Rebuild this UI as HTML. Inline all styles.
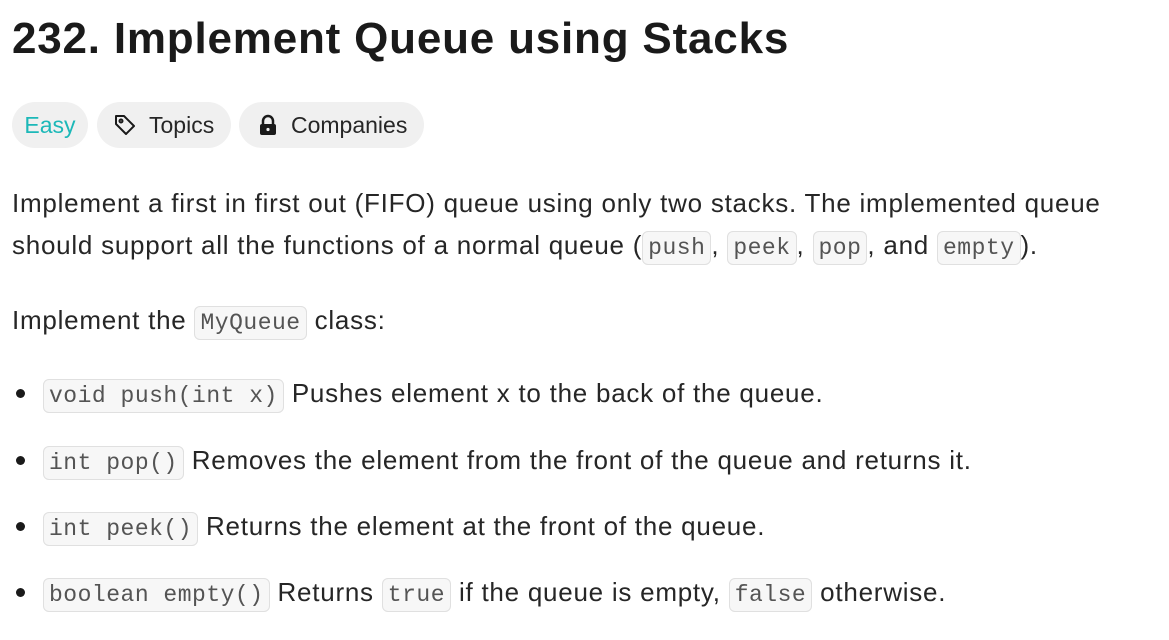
<!DOCTYPE html>
<html><head><meta charset="utf-8"><style>
body{margin:0;background:#fff;color:#262626;font-family:"Liberation Sans",sans-serif;width:1169px;height:640px;overflow:hidden;position:relative}
h1{position:absolute;left:12px;top:14px;margin:0;font-size:44px;font-weight:bold;color:#1a1a1a;letter-spacing:0.8px}
.pill{position:absolute;top:102px;height:46px;border-radius:23px;background:#f0f0f0;font-size:23px;line-height:46px;color:#262626}
p{position:absolute;left:12px;margin:0;font-size:26px;line-height:42px;white-space:nowrap;letter-spacing:0.75px}
code{font-family:"Liberation Mono",monospace;font-size:23px;background:#f7f7f7;border:1px solid #e0e0e0;border-radius:6px;padding:3px 5px;color:#545454;letter-spacing:0.5px}
.dot{position:absolute;left:16px;width:9px;height:9px;border-radius:50%;background:#1a1a1a}
</style></head><body>
<h1>232. Implement Queue using Stacks</h1>
<div class="pill" style="left:12px;width:76px;color:#1cb8b8;text-align:center">Easy</div>
<div class="pill" style="left:97px;width:134px">
<svg style="position:absolute;left:16px;top:11px" width="24" height="24" viewBox="0 0 24 24" fill="none" stroke="#1a1a1a" stroke-width="2" stroke-linejoin="round"><path d="M3 3h8l10 10-8 8L3 11z"/><circle cx="8" cy="8" r="1.5"/></svg>
<span style="position:absolute;left:52px">Topics</span></div>
<div class="pill" style="left:239px;width:185px">
<svg style="position:absolute;left:18px;top:12px" width="22" height="22" viewBox="0 0 22 22"><path d="M6 10V7a5 5 0 0 1 10 0v3" fill="none" stroke="#1a1a1a" stroke-width="2.5"/><rect x="3" y="10" width="16" height="11" rx="2" fill="#1a1a1a"/><circle cx="11" cy="15.5" r="1.6" fill="#f0f0f0"/></svg>
<span style="position:absolute;left:52px">Companies</span></div>
<p style="top:182px">Implement a first in first out (FIFO) queue using only two stacks. The implemented queue</p>
<p style="top:224px">should support all the functions of a normal queue (<code>push</code>, <code>peek</code>, <code>pop</code>, and <code>empty</code>).</p>
<p style="top:299px">Implement the <code>MyQueue</code> class:</p>
<div class="dot" style="top:389px"></div><p style="left:43px;top:372px"><code>void push(int x)</code> Pushes element x to the back of the queue.</p>
<div class="dot" style="top:456px"></div><p style="left:43px;top:439px"><code>int pop()</code> Removes the element from the front of the queue and returns it.</p>
<div class="dot" style="top:522px"></div><p style="left:43px;top:505px"><code>int peek()</code> Returns the element at the front of the queue.</p>
<div class="dot" style="top:588px"></div><p style="left:43px;top:571px"><code>boolean empty()</code> Returns <code>true</code> if the queue is empty, <code>false</code> otherwise.</p>
</body></html>
